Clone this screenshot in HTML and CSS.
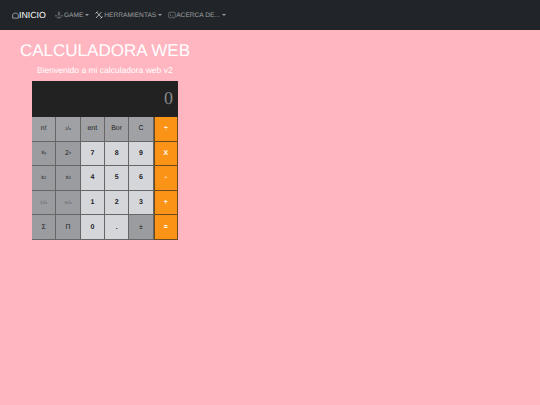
FILE: index.html
```html
<!DOCTYPE html>
<html>
  <head>
    <link rel="stylesheet" href="styles.css">
    <title>Calculadora Web</title>
  </head>
  <body>
    <nav class="navbar">
      <a class="nav-brand">
        <svg class="nav-icon" viewBox="0 0 16 16"><path d="M1.500 14V7.500C1.500 4.500 4.500 2.500 8 2.500s6.500 2 6.500 5V14z" fill="none" stroke="currentColor" stroke-width="1.200"/></svg>INICIO
      </a>
      <a class="nav-link game">
        <svg class="nav-icon" viewBox="0 0 16 16"><path d="M8 4v10M1.500 9c0 3 3 5 6.500 5s6.500-2 6.500-5M5 6.500h6M1 9.500L2 8l1.500 1.500M12.500 9.500L14 8l1 1.500" fill="none" stroke="currentColor" stroke-width="1"/><circle cx="8" cy="2.800" r="1.300" fill="none" stroke="currentColor"/></svg>
        GAME<span class="caret"></span>
      </a>
      <a class="nav-link tools">
        <svg class="nav-icon" viewBox="0 0 16 16"><path d="M3 2l11 12M13 2L2 14M1 5l4-4M11 15l4-4" fill="none" stroke="currentColor" stroke-width="1.600"/></svg>
        HERRAMIENTAS<span class="caret"></span>
      </a>
      <a class="nav-link about">
        <svg class="nav-icon" viewBox="0 0 16 16"><rect x="1.500" y="2.500" width="13" height="11" rx="1.500" fill="none" stroke="currentColor"/><path d="M4 6l2 2-2 2M8 10h3" fill="none" stroke="currentColor"/></svg>ACERCA DE...<span class="caret"></span>
      </a>
    </nav>

    <div class="content">
      <h1 class="title">CALCULADORA WEB</h1>
      <p class="subtitle">Bienvenido a mi calculadora web v2</p>

      <div class="calculator">
        <div class="display">0</div>
        <div class="keys">
          <button class="key dark">n!</button>
          <button class="key dark small"><sup>1</sup>/<sub>x</sub></button>
          <button class="key dark">ent</button>
          <button class="key dark">Bor</button>
          <button class="key dark">C</button>
          <button class="key op">÷</button>

          <button class="key darker small">x<sup>y</sup></button>
          <button class="key darker">2<sup>n</sup></button>
          <button class="key light">7</button>
          <button class="key light">8</button>
          <button class="key light">9</button>
          <button class="key op">X</button>

          <button class="key darker small">x<sup>2</sup></button>
          <button class="key darker small">x<sup>3</sup></button>
          <button class="key light">4</button>
          <button class="key light">5</button>
          <button class="key light">6</button>
          <button class="key op">-</button>

          <button class="key darker tiny"><sup>2</sup>√<sub>x</sub></button>
          <button class="key darker tiny"><sup>3</sup>√<sub>x</sub></button>
          <button class="key light">1</button>
          <button class="key light">2</button>
          <button class="key light">3</button>
          <button class="key op">+</button>

          <button class="key darker">Σ</button>
          <button class="key darker">Π</button>
          <button class="key light">0</button>
          <button class="key light">.</button>
          <button class="key darker">±</button>
          <button class="key op">=</button>
        </div>
      </div>
    </div>
  </body>
</html>
```

FILE: styles.css
```css
* {
  box-sizing: border-box;
}
body {
  margin: 0;
  min-height: 405px;
  background-color: #ffb6c1;
  font-family: "Liberation Sans", Arial, sans-serif;
  text-rendering: geometricPrecision;
  overflow: hidden;
}

.navbar {
  display: flex;
  align-items: center;
  height: 30px;
  padding-left: 12px;
  background-color: #212529;
}
.nav-brand {
  display: flex;
  align-items: center;
  margin-right: 9px;
  font-size: 8.800px;
  color: #fff;
}
.nav-link {
  display: flex;
  align-items: center;
  margin-right: 6px;
  font-size: 6.600px;
  color: rgba(255, 255, 255, 0.55);
}
.nav-icon {
  width: 7px;
  height: 7px;
}
.nav-link .nav-icon {
  width: 8px;
  height: 8px;
  margin-right: 1px;
}
.tools .nav-icon {
  color: rgba(255, 255, 255, 0.8);
}
.about .nav-icon {
  margin-right: 0;
}
.caret {
  margin-left: 2px;
  border-top: 2px solid currentColor;
  border-left: 2px solid transparent;
  border-right: 2px solid transparent;
}

.content {
  padding: 11px 0 0 20px;
}
.title {
  margin: 0;
  font-size: 17px;
  line-height: 20px;
  font-weight: 400;
  color: #fff;
}
.subtitle {
  margin: 4px 0 0 17px;
  font-size: 8.500px;
  line-height: 10px;
  color: #fff;
}

.calculator {
  width: 146px;
  margin: 6px 0 0 12px;
}
.display {
  height: 36px;
  padding: 6px 5px 0 0;
  background-color: #222;
  color: #888;
  font-family: "Liberation Serif", serif;
  font-size: 18px;
  line-height: 22px;
  text-align: right;
}
.keys {
  display: grid;
  grid-template-columns: repeat(6, 1fr);
  grid-auto-rows: 24.600px;
}
.key {
  display: flex;
  align-items: center;
  justify-content: center;
  padding: 0;
  border: 0;
  border-right: 1px solid #666;
  border-bottom: 1px solid #666;
  font-family: "Liberation Sans", Arial, sans-serif;
  text-rendering: geometricPrecision;
  font-size: 7px;
  color: #222;
}
.key sup,
.key sub {
  font-size: 4px;
  line-height: 0;
}
.dark {
  background-color: #a0a1a4;
}
.darker {
  background-color: #9b9c9f;
}
.light {
  background-color: #d5d6da;
  font-weight: 700;
}
.op {
  background-color: #fb9416;
  border-right: 1px solid #6b4a20;
  border-bottom: 1px solid #6b4a20;
  border-left: 1px solid #6b4a20;
  color: #fff;
  font-weight: 700;
}
.small {
  font-size: 6px;
}
.tiny {
  font-size: 5px;
  color: #555;
}
```
